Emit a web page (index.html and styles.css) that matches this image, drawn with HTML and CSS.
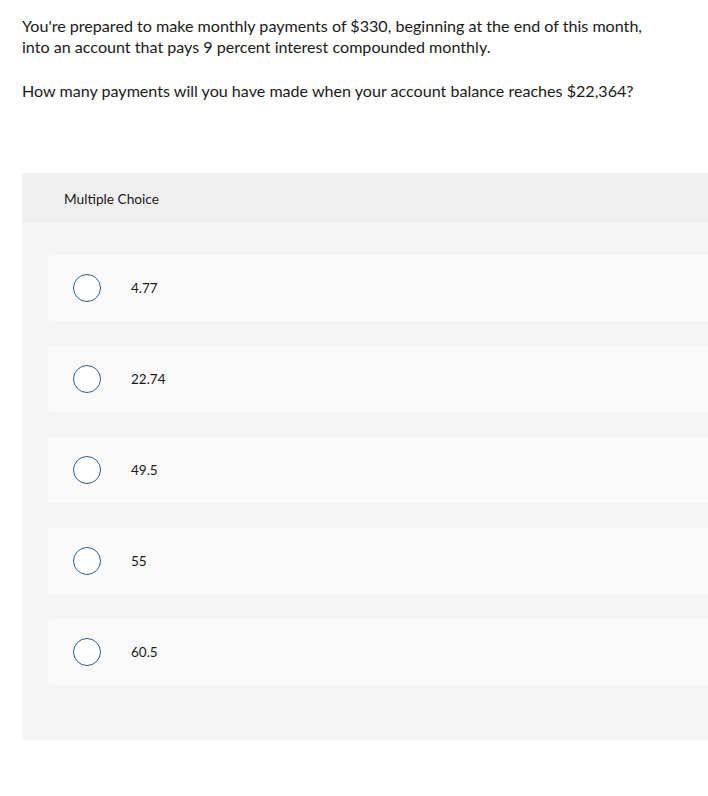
FILE: index.html
```html
<!DOCTYPE html>
<html>
<head>
<meta charset="utf-8">
<link rel="stylesheet" href="styles.css">
</head>
<body>
<div class="page">
  <div class="question">
    <p>You're prepared to make monthly payments of $330, beginning at the end of this month, into an account that pays 9 percent interest compounded monthly.</p>
    <p>How many payments will you have made when your account balance reaches $22,364?</p>
  </div>
  <div class="panel">
    <div class="panel-head">Multiple Choice</div>
    <div class="options">
      <div class="option"><span class="radio"></span><span class="label">4.77</span></div>
      <div class="option"><span class="radio"></span><span class="label">22.74</span></div>
      <div class="option"><span class="radio"></span><span class="label">49.5</span></div>
      <div class="option"><span class="radio"></span><span class="label">55</span></div>
      <div class="option"><span class="radio"></span><span class="label">60.5</span></div>
    </div>
  </div>
</div>
</body>
</html>
```
FILE: styles.css
```css
html, body {
  margin: 0;
  padding: 0;
  background: #fff;
}
body {
  font-family: Lato, "Open Sans", "Liberation Sans", sans-serif;
  color: #1a1a1a;
}
.page {
  padding: 15px 0 0 22px;
}
.question {
  font-size: 16.1px;
  line-height: 21px;
  width: 640px;
}
.question p {
  margin: 0 0 23px 0;
}
.panel {
  margin-top: 72px;
  background: #f5f5f5;
  border-radius: 3px 0 0 3px;
  padding-bottom: 55px;
}
.panel-head {
  background: #f0f0f0;
  height: 50px;
  box-sizing: border-box;
  padding-left: 42px;
  display: flex;
  align-items: center;
  font-size: 13.7px;
  border-radius: 3px 0 0 0;
}
.options {
  display: flex;
  flex-direction: column;
  gap: 25px;
  padding: 32px 0 0 26px;
}
.option {
  height: 66px;
  background: #fafafa;
  border-radius: 3px 0 0 3px;
  display: flex;
  align-items: center;
  padding-left: 25px;
}
.radio {
  width: 26px;
  height: 26px;
  border: 1px solid #2d5d92;
  border-radius: 50%;
  background: #fff;
  flex: none;
}
.label {
  margin-left: 30px;
  font-size: 13.5px;
}
```
